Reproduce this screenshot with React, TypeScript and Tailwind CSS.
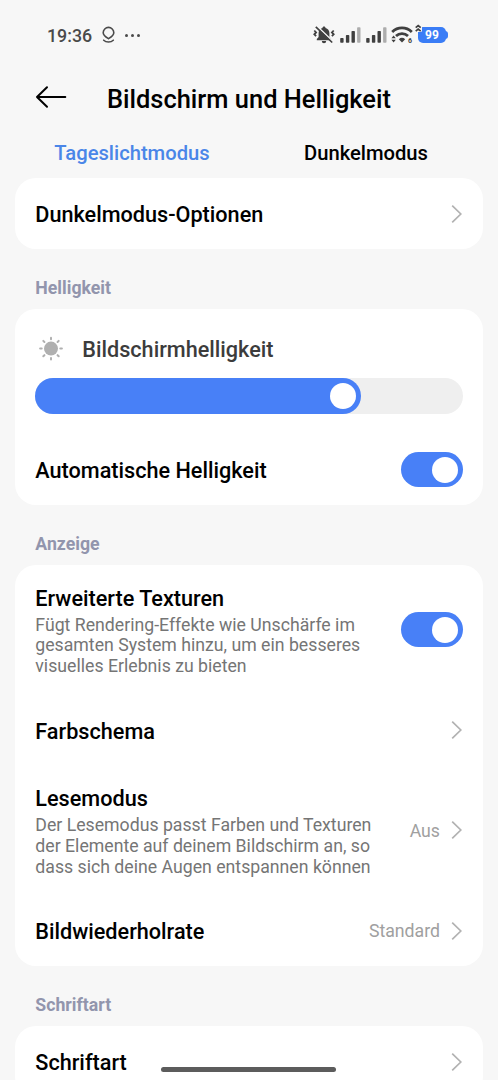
import { useState, type ReactNode } from 'react'

function BackIcon() {
  return (
    <svg width="32" height="24" viewBox="0 0 32 24" fill="none" stroke="#000" strokeWidth="2" strokeLinecap="round" strokeLinejoin="round">
      <path d="M30.3 12H2M12 2.2L2 12l10 9.8" />
    </svg>
  )
}

function ChevronIcon() {
  return (
    <svg className="mr-px shrink-0" width="11" height="20" viewBox="0 0 11 20" fill="none" stroke="#b2b2b2" strokeWidth="1.7">
      <path d="M1.2 1.6L9.8 10l-8.6 8.4" />
    </svg>
  )
}

function SunIcon() {
  return (
    <svg width="26" height="26" viewBox="0 0 26 26" stroke="#b0b0b0" strokeWidth="2" strokeLinecap="round">
      <circle cx="13" cy="12.6" r="7" fill="#b0b0b0" stroke="none" />
      {[0, 45, 90, 135, 180, 225, 270, 315].map(a => (
        <path key={a} d="M13 1.7v1.6" transform={`rotate(${a} 13 12.6)`} />
      ))}
    </svg>
  )
}

function PinIcon() {
  return (
    <svg width="14" height="18" viewBox="0 0 14 18" fill="none" stroke="#4a4a4a" strokeWidth="1.6" strokeLinecap="round" strokeLinejoin="round">
      <path d="M7.5 12.7C5.1 11.2 2.2 9.4 2.2 6.7a5.3 5.3 0 0 1 10.6 0c0 2.7-2.9 4.500-5.300 6z" />
      <path d="M2.7 14.200c1.300 1.300 2.900 1.800 4.800 1.800s3.500-.5 4.800-1.800" />
    </svg>
  )
}

function MutedBellIcon() {
  return (
    <svg width="22" height="20" viewBox="0 0 22 20" fill="none">
      <path d="M11 1.5c.9 0 1.5.6 1.5 1.4 2.4.7 3.9 2.6 3.900 5v4.100l1.800 1.900v1.300h-14.400v-1.300l1.800-1.900v-4.100c0-2.400 1.500-4.300 3.900-5 0-.8.600-1.400 1.500-1.400z" fill="#404040" />
      <path d="M8.8 16h4.400a2.200 2.200 0 0 1-4.400 0z" fill="#404040" />
      <path d="M3.6 .8l16.400 15.7" stroke="#f7f7f7" strokeWidth="1.7" />
      <path d="M2.8 1.8l16.400 15.7" stroke="#404040" strokeWidth="1.7" />
      <path d="M1.3 5.5l1.8 1.9-1.8 1.9 1.8 1.9M20.7 5.5l-1.8 1.9 1.8 1.9-1.8 1.9" stroke="#404040" strokeWidth="1.8" />
    </svg>
  )
}

function SignalIcon() {
  return (
    <svg width="21" height="16" viewBox="0 0 21 16" fill="#404040">
      <rect x="0.2" y="11" width="3.4" height="4.8" rx="0.8" />
      <rect x="5.9" y="8" width="3.4" height="7.8" rx="0.8" />
      <rect x="11.5" y="4" width="3.4" height="11.8" rx="0.8" />
      <rect x="17.1" y="0.3" width="3.4" height="15.5" rx="0.8" fill="#adadad" />
    </svg>
  )
}

function WifiIcon() {
  return (
    <svg width="22" height="18" viewBox="0 0 22 18" fill="none">
      <path d="M1.2 5.9a14 14 0 0 1 19.6 0" stroke="#404040" strokeWidth="2.8" />
      <path d="M5 10.1a8.7 8.7 0 0 1 12 0" stroke="#404040" strokeWidth="2.8" />
      <path d="M11 16.5l-3.2-3.3a4.7 4.7 0 0 1 6.4 0z" fill="#404040" />
      <path d="M2.6 9.5l2.2 2.7h-4.4zM2.6 16.5l2.2-2.7h-4.4z" fill="#404040" />
      <text x="17" y="16.8" fill="#404040" fontSize="7" fontWeight="700">6</text>
    </svg>
  )
}

function Battery() {
  return (
    <div className="relative flex items-center">
      <div className="flex h-4 w-[28px] items-center justify-center rounded-[5px] bg-[#3a7df6] text-[12px] leading-none font-bold text-white">
        99
      </div>
      <div className="-ml-px h-2 w-[3px] rounded-r-full bg-[#3a7df6]" />
      <svg className="absolute -top-[3px] -left-[3px]" width="8" height="9" viewBox="0 0 8 9" fill="none">
        <path d="M0 0h5.5q1.5 0 1.5 1.5v5q0 1.5-1.5 1.5h-5.5z" fill="#f7f7f7" />
        <path d="M0.7 3.7l2.5-2.1 2.5 2.1M0.7 7.2l2.5-2.1 2.5 2.1" stroke="#404040" strokeWidth="1.7" />
      </svg>
    </div>
  )
}

function StatusBar() {
  return (
    <div className="flex h-[70px] items-center pr-[50px] pl-[47px] text-[#4a4a4a]">
      <span className="pt-px text-[17.8px] leading-5 font-medium">19:36</span>
      <div className="ml-[9px]">
        <PinIcon />
      </div>
      <div className="ml-[10px] flex gap-[2.7px]">
        <span className="size-[3px] rounded-full bg-[#4a4a4a]" />
        <span className="size-[3px] rounded-full bg-[#4a4a4a]" />
        <span className="size-[3px] rounded-full bg-[#4a4a4a]" />
      </div>
      <div className="ml-auto flex items-center">
        <MutedBellIcon />
        <div className="ml-[5px] flex gap-[5px]">
          <SignalIcon />
          <SignalIcon />
        </div>
        <div className="mr-[5px] ml-1">
          <WifiIcon />
        </div>
        <Battery />
      </div>
    </div>
  )
}

function Toggle({ checked, onChange }: { checked: boolean; onChange: () => void }) {
  return (
    <button
      role="switch"
      aria-checked={checked}
      onClick={onChange}
      className={`flex h-[35px] w-[62px] shrink-0 items-center rounded-full px-[5px] ${checked ? 'justify-end bg-[#4880f7]' : 'justify-start bg-[#efefef]'}`}
    >
      <span className="size-[26px] rounded-full bg-white" />
    </button>
  )
}

interface SettingRowProps {
  title: string
  description?: string
  value?: string
  action?: ReactNode
}

function SettingRow({ title, description, value, action }: SettingRowProps) {
  return (
    <div className={`flex items-center px-5 ${description ? 'h-[129.5px]' : 'h-[71px]'}`}>
      <div className="flex-1 pt-[3px] pl-[0.3px]">
        <h3 className="text-[21.65px] leading-[26px] font-medium text-black">{title}</h3>
        {description && (
          <p className="mt-[3px] w-[345px] text-[17.7px] leading-[20.7px] text-[#757575]">{description}</p>
        )}
      </div>
      {value && <span className="mr-[11px] pt-px text-[17.7px] leading-6 text-[#a0a0a0]">{value}</span>}
      {action ?? <ChevronIcon />}
    </div>
  )
}

function Card({ children }: { children: ReactNode }) {
  return <div className="mx-[15px] rounded-[21px] bg-white">{children}</div>
}

function SectionLabel({ children }: { children: ReactNode }) {
  return (
    <h2 className="flex h-[60px] items-center px-[35.3px] pt-[17px] text-[17.7px] leading-5 font-bold text-[#9295ad]">
      {children}
    </h2>
  )
}

export default function App() {
  const [autoBrightness, setAutoBrightness] = useState(true)
  const [textures, setTextures] = useState(true)
  const brightness = 76.2

  return (
    <div className="relative h-[1080px] w-[498px] overflow-hidden bg-[#f7f7f7] font-['Roboto',sans-serif]">
      <StatusBar />

      <header className="flex h-[57px] items-center pl-[35px]">
        <div className="pb-[3px]">
          <BackIcon />
        </div>
        <h1 className="ml-10 text-[25.45px] leading-8 font-medium">Bildschirm und Helligkeit</h1>
      </header>

      <div className="flex h-[51px] items-center px-[15px] pt-0.5 text-[20.2px] font-medium">
        <button className="flex-1 text-center text-[#4a86e8]">Tageslichtmodus</button>
        <button className="flex-1 text-center text-black">Dunkelmodus</button>
      </div>

      <Card>
        <SettingRow title="Dunkelmodus-Optionen" />
      </Card>

      <SectionLabel>Helligkeit</SectionLabel>
      <Card>
        <div className="px-5 pt-[26px]">
          <div className="flex items-center gap-[18px] pl-[3px]">
            <SunIcon />
            <h3 className="pt-0.5 pl-[0.3px] text-[21.65px] leading-[26px] font-medium text-[#3c3c3c]">
              Bildschirmhelligkeit
            </h3>
          </div>
          <div className="mt-[15px] h-[35.5px] rounded-full bg-[#efefef]">
            <div
              className="flex h-full items-center justify-end rounded-full bg-[#4880f7] pr-[5px]"
              style={{ width: `${brightness}%` }}
            >
              <span className="size-[26px] rounded-full bg-white" />
            </div>
          </div>
        </div>
        <div className="pt-[20.5px]">
          <SettingRow
            title="Automatische Helligkeit"
            action={<Toggle checked={autoBrightness} onChange={() => setAutoBrightness(!autoBrightness)} />}
          />
        </div>
      </Card>

      <SectionLabel>Anzeige</SectionLabel>
      <Card>
        <SettingRow
          title="Erweiterte Texturen"
          description="Fügt Rendering-Effekte wie Unschärfe im gesamten System hinzu, um ein besseres visuelles Erlebnis zu bieten"
          action={<Toggle checked={textures} onChange={() => setTextures(!textures)} />}
        />
        <SettingRow title="Farbschema" />
        <SettingRow
          title="Lesemodus"
          description="Der Lesemodus passt Farben und Texturen der Elemente auf deinem Bildschirm an, so dass sich deine Augen entspannen können"
          value="Aus"
        />
        <SettingRow title="Bildwiederholrate" value="Standard" />
      </Card>

      <SectionLabel>Schriftart</SectionLabel>
      <Card>
        <SettingRow title="Schriftart" />
      </Card>

      {/* Gesture navigation handle */}
      <div className="absolute bottom-[8px] left-[161px] h-[5px] w-[175px] rounded-full bg-[#5c5c5c]" />
    </div>
  )
}
